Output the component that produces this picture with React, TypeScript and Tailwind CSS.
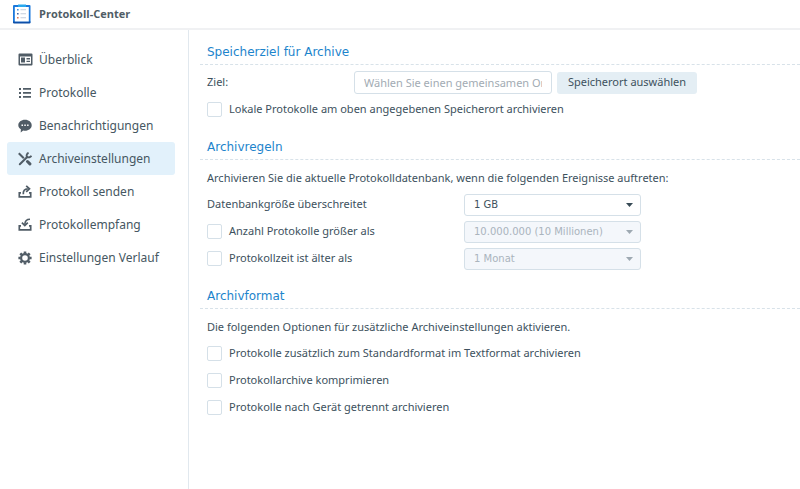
import type { ReactNode } from "react";
import clsx from "clsx";

function OverviewIcon() {
  return (
    <svg viewBox="0 0 15 13" className="h-[13px] w-[15px]" fill="currentColor">
      <path
        fillRule="evenodd"
        d="M1.500.5h12a1 1 0 0 1 1 1v10a1 1 0 0 1-1 1h-12a1 1 0 0 1-1-1v-10a1 1 0 0 1 1-1ZM2 3.500v7.200h11V3.500Z"
      />
      <path d="M3 4.500h4v5H3ZM8.500 5H12v1.400H8.500ZM8.500 7.700H12v1.400H8.500Z" />
    </svg>
  );
}

function ListIcon() {
  return (
    <svg viewBox="0 0 13 12" className="h-3 w-[13px]" fill="currentColor">
      <path d="M0 1h2v2H0ZM4 1h8v1.700H4ZM0 5h2v2H0ZM4 5h8v1.700H4ZM0 9h2v2H0ZM4 9h8v1.700H4Z" />
    </svg>
  );
}

function ChatIcon() {
  return (
    <svg viewBox="0 0 14 14" className="h-[14px] w-[14px]">
      <path
        fill="currentColor"
        d="M7 .8c3.800 0 6.700 2.400 6.700 5.500S10.800 11.800 7 11.800c-.6 0-1.200-.1-1.800-.2L2.700 13.500l.2-3.200C1.300 9.300.3 7.900.3 6.300.3 3.200 3.200.8 7 .8Z"
      />
      <path fill="#fff" d="M3.500 5.600h1.500v1.500H3.500ZM6.300 5.600h1.500v1.500H6.300ZM9.100 5.600h1.500v1.500H9.100Z" />
    </svg>
  );
}

function ToolsIcon() {
  return (
    <svg viewBox="0 0 14 14" className="h-[14px] w-[14px]" fill="none" stroke="currentColor">
      <path strokeWidth="2" d="m.8 1.300 5 5" />
      <path strokeWidth="3" strokeLinecap="round" d="m9.500 9.500 2.400 2.400" />
      <path strokeWidth="2" strokeLinecap="round" d="m1.800 12.300 7.400-7.300" />
      <path strokeWidth="1.900" d="M10.600.8a3.100 3.100 0 0 0-1.700 4.100 3.100 3.100 0 0 0 4.500-1.300" />
    </svg>
  );
}

function SendIcon() {
  return (
    <svg viewBox="0 0 14 13" className="h-[13px] w-[14px]" fill="none" stroke="currentColor">
      <path strokeWidth="1.700" d="M3 7.800H1.300v4h11.400v-4H11" />
      <path strokeWidth="1.700" d="M5.300 9.300c-.3-3.500 1.300-5.300 4.500-5.400" />
      <path strokeWidth="1.700" d="m8.200.8 3.300 3-3.300 3.100" />
    </svg>
  );
}

function ReceiveIcon() {
  return (
    <svg viewBox="0 0 14 13" className="h-[13px] w-[14px]" fill="none" stroke="currentColor">
      <path strokeWidth="1.700" d="M3 7.800H1.300v4h11.400v-4H11" />
      <path strokeWidth="1.600" d="M12 1.300C8.700 1.300 7 3 6.800 6.500" />
      <path strokeWidth="1.700" d="m3.900 4.700 2.900 2.900 3-2.900" />
    </svg>
  );
}

function GearIcon() {
  return (
    <svg viewBox="0 0 14 14" className="h-[14px] w-[14px]" fill="none" stroke="currentColor">
      <circle cx="7" cy="7" r="3.900" strokeWidth="2.200" />
      <path
        strokeWidth="2.600"
        d="M7 .4v2M7 11.600v2M.4 7h2M11.600 7h2M2.300 2.300l1.500 1.500M10.200 10.200l1.500 1.500M2.300 11.700l1.500-1.500M10.200 3.800l1.500-1.500"
      />
    </svg>
  );
}

function AppLogo() {
  return (
    <svg viewBox="0 0 18 20" className="h-5 w-[18px]">
      <rect x="0" y="1" width="17.500" height="18" rx="1" fill="#1a78dc" />
      <path fill="#0d4fa8" d="M0 17.500h17.500v1a1 1 0 0 1-1 1H1a1 1 0 0 1-1-1Z" />
      <path fill="#fff" d="M1.800 3h14v14.500h-14Z" />
      <path fill="#29a9ee" d="M5 .500h8v2.500H5Z" />
      <path fill="#3c8fe0" d="M4 5h1.600v1.600H4Z" />
      <path fill="#3f64a8" d="M4 9h1.600v1.600H4Z" />
      <path fill="#d67a5e" d="M4 13h1.600v1.600H4Z" />
      <path fill="#c3cddb" d="M7.500 5.300h5.500v1H7.500ZM7.500 9.300h5.500v1H7.500ZM7.500 13.300h5.500v1H7.500Z" />
    </svg>
  );
}

const navItems = [
  { label: "Überblick", icon: OverviewIcon },
  { label: "Protokolle", icon: ListIcon },
  { label: "Benachrichtigungen", icon: ChatIcon },
  { label: "Archiveinstellungen", icon: ToolsIcon, active: true },
  { label: "Protokoll senden", icon: SendIcon },
  { label: "Protokollempfang", icon: ReceiveIcon },
  { label: "Einstellungen Verlauf", icon: GearIcon },
];

function Section({ title, children }: { title: string; children: ReactNode }) {
  return (
    <section>
      <h2 className="mb-1 h-[23px] border-b border-dashed border-[#d8e2e9] pl-[7px] font-['DejaVu_Sans',Verdana,sans-serif] text-[12px] leading-[21px] text-[#1c84cc]">
        {title}
      </h2>
      <div className="pl-[7px]">{children}</div>
    </section>
  );
}

function Checkbox({ id, label }: { id: string; label: string }) {
  return (
    <div className="flex h-[27px] items-center gap-[7px]">
      <input
        id={id}
        type="checkbox"
        className="h-[15px] w-[15px] shrink-0 appearance-none rounded-[2px] border border-[#d5e0e8] bg-white checked:bg-[#1480c8]"
      />
      <label htmlFor={id}>{label}</label>
    </div>
  );
}

function Select({
  id,
  label,
  value,
  disabled,
}: {
  id: string;
  label: string;
  value: string;
  disabled?: boolean;
}) {
  return (
    <div className="relative w-[177px] shrink-0">
      <select
        id={id}
        aria-label={label}
        disabled={disabled}
        className="block h-[22px] w-full appearance-none rounded-[3px] border border-[#d5e0e8] bg-white pl-[9px] font-['DejaVu_Sans',Verdana,sans-serif] text-[10px] text-[#3d515d] disabled:bg-[#f4f7fb] disabled:text-[#aab4bd] disabled:opacity-100"
      >
        <option>{value}</option>
      </select>
      <svg
        viewBox="0 0 7 4"
        className={clsx(
          "pointer-events-none absolute top-[9px] right-2 h-1 w-[7px]",
          disabled ? "text-[#9ea9b2]" : "text-[#384b56]",
        )}
        fill="currentColor"
      >
        <path d="M0 0h7L3.500 4Z" />
      </svg>
    </div>
  );
}

export default function App() {
  return (
    <div className="flex min-h-screen flex-col bg-white font-['Noto_Sans',Verdana,sans-serif] text-[11px] text-[#3d515d]">
      <header className="flex h-[30px] items-center gap-2 border-b-2 border-[#f0f1f3] pl-[13px]">
        <AppLogo />
        <h1 className="font-['Open_Sans',sans-serif] text-[11px] font-bold text-[#505d66]">
          Protokoll-Center
        </h1>
      </header>

      <div className="flex flex-1">
        <nav className="w-[189px] shrink-0 border-r border-[#e1e8ee] pt-[13px] pr-[13px] pl-[7px]">
          {navItems.map(({ label, icon: Icon, active }) => (
            <a
              key={label}
              href="#"
              className={clsx(
                "flex h-[33px] items-center gap-[6px] rounded-[3px] pl-[10px] text-[12px] text-[#465762]",
                active && "bg-[#e2f1fb]",
              )}
            >
              <span className="flex w-4 justify-center text-[#505c66]">
                <Icon />
              </span>
              {label}
            </a>
          ))}
        </nav>

        <main className="min-w-0 flex-1 space-y-[14px] overflow-hidden pt-3 pl-[11px]">
          <Section title="Speicherziel für Archive">
            <div className="flex h-[27px] items-center">
              <label htmlFor="target" className="w-[147px] shrink-0">
                Ziel:
              </label>
              <input
                id="target"
                type="text"
                placeholder="Wählen Sie einen gemeinsamen Ordner"
                className="h-[23px] w-[198px] rounded-[3px] border border-[#d5e0e8] px-[9px] placeholder:text-[#a2abb3]"
              />
              <button
                type="button"
                className="ml-[5px] h-[22px] w-[140px] rounded-[3px] bg-[#e4eef4]"
              >
                Speicherort auswählen
              </button>
            </div>
            <Checkbox
              id="local"
              label="Lokale Protokolle am oben angegebenen Speicherort archivieren"
            />
          </Section>

          <Section title="Archivregeln">
            <p className="leading-[27px]">
              Archivieren Sie die aktuelle Protokolldatenbank, wenn die folgenden Ereignisse auftreten:
            </p>
            <div className="flex h-[27px] items-center">
              <label htmlFor="size" className="w-[257px]">
                Datenbankgröße überschreitet
              </label>
              <Select id="size" label="Datenbankgröße überschreitet" value="1 GB" />
            </div>
            <div className="flex">
              <div className="w-[257px]">
                <Checkbox id="count" label="Anzahl Protokolle größer als" />
              </div>
              <div className="flex items-center">
                <Select
                  id="count-value"
                  label="Anzahl Protokolle"
                  value="10.000.000 (10 Millionen)"
                  disabled
                />
              </div>
            </div>
            <div className="flex">
              <div className="w-[257px]">
                <Checkbox id="age" label="Protokollzeit ist älter als" />
              </div>
              <div className="flex items-center">
                <Select id="age-value" label="Protokollzeit" value="1 Monat" disabled />
              </div>
            </div>
          </Section>

          <Section title="Archivformat">
            <p className="leading-[27px]">
              Die folgenden Optionen für zusätzliche Archiveinstellungen aktivieren.
            </p>
            <Checkbox
              id="text"
              label="Protokolle zusätzlich zum Standardformat im Textformat archivieren"
            />
            <Checkbox id="compress" label="Protokollarchive komprimieren" />
            <Checkbox id="device" label="Protokolle nach Gerät getrennt archivieren" />
          </Section>
        </main>
      </div>
    </div>
  );
}
